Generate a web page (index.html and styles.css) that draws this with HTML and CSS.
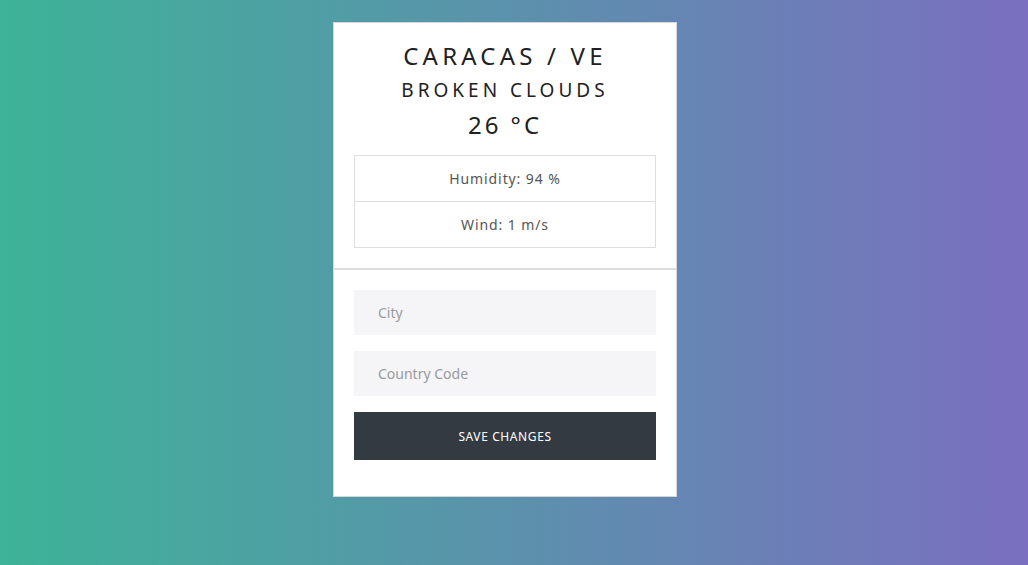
FILE: index.html
```html
<!DOCTYPE html>
<html lang="en">
<head>
<meta charset="utf-8">
<title>Weather</title>
<link rel="stylesheet" href="styles.css">
</head>
<body>
<main class="page">
  <section class="card">
    <div class="card-top">
      <h2 class="city">CARACAS / VE</h2>
      <h3 class="desc">BROKEN CLOUDS</h3>
      <h2 class="temp">26 °C</h2>
      <ul class="details">
        <li class="detail">Humidity: 94 %</li>
        <li class="detail">Wind: 1 m/s</li>
      </ul>
    </div>
    <form class="card-form">
      <input class="field" type="text" placeholder="City">
      <input class="field" type="text" placeholder="Country Code">
      <button class="save" type="button">SAVE CHANGES</button>
    </form>
  </section>
</main>
</body>
</html>
```

FILE: styles.css
```css
* { box-sizing: border-box; }
html, body { margin: 0; height: 100%; }
body {
  background: linear-gradient(to right, #3db398, #7a6fc0);
  font-family: "Noto Sans", "Open Sans", sans-serif;
  color: #212121;
}
.page {
  display: flex;
  padding-top: 22px;
  padding-left: 333px;
}
.card {
  width: 344px;
  background: #fff;
  border: 1px solid #d6d6d8;
}
.card-top {
  padding: 18px 20px 20px;
  border-bottom: 2px solid #dcdcdc;
  text-align: center;
}
.city {
  margin: 0 0 8px;
  font-size: 24px;
  line-height: 29px;
  font-weight: 400;
  letter-spacing: 4.2px;
}
.desc {
  margin: 0 0 8px;
  font-size: 19px;
  line-height: 24px;
  font-weight: 400;
  letter-spacing: 4px;
}
.temp {
  margin: 0 0 16px;
  font-size: 24px;
  line-height: 29px;
  font-weight: 400;
  letter-spacing: 3px;
}
.details {
  list-style: none;
  margin: 0;
  padding: 0;
  border: 1px solid #dedede;
}
.detail {
  height: 45px;
  display: flex;
  align-items: center;
  justify-content: center;
  font-size: 14px;
  letter-spacing: 0.9px;
  color: #555;
}
.detail + .detail { border-top: 1px solid #dedede; height: 46px; }
.card-form {
  display: flex;
  flex-direction: column;
  gap: 16px;
  padding: 20px 20px 36px;
}
.field {
  height: 45px;
  border: none;
  background: #f5f5f7;
  padding: 0 24px;
  font-family: inherit;
  font-size: 14px;
  color: #333;
  outline: none;
}
.field::placeholder { color: #9a9a9e; }
.save {
  height: 48px;
  border: none;
  background: #343a42;
  color: #fff;
  font-family: inherit;
  font-size: 12px;
  letter-spacing: 0.6px;
}
```
